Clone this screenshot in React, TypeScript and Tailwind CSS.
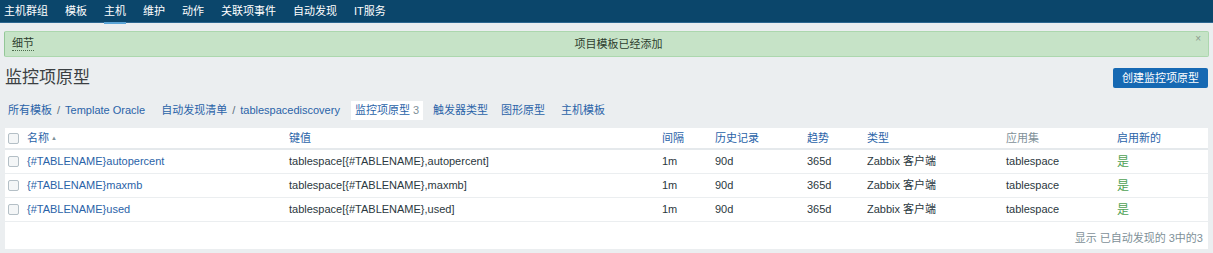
import { useState } from "react";

const nav = ["主机群组", "模板", "主机", "维护", "动作", "关联项事件", "自动发现", "IT服务"];

const rows = [
  { name: "{#TABLENAME}autopercent", key: "tablespace[{#TABLENAME},autopercent]" },
  { name: "{#TABLENAME}maxmb", key: "tablespace[{#TABLENAME},maxmb]" },
  { name: "{#TABLENAME}used", key: "tablespace[{#TABLENAME},used]" },
];

const grid = "grid grid-cols-[22px_262px_373px_53px_92px_60px_139px_111px_1fr] items-center";

function Box() {
  return <span className="block h-[11px] w-[11px] rounded-[2px] border border-[#b4bfc6] bg-[#f4f6f7]" />;
}

export default function App() {
  const [shown, setShown] = useState(true);

  return (
    <div className="h-[253px] w-[1213px] overflow-hidden bg-[#ebeef0] text-[11px] text-[#2b3840] [font-family:'Liberation_Sans','Noto_Sans_CJK_SC',sans-serif]">
      <div className="flex h-[23px] items-center gap-[17px] border-b border-[#2d6791] bg-[#0b466b] pl-[4px] text-[11px] text-white">
        {nav.map((n) => (
          <span key={n} className={`relative ${n === "主机" ? "after:absolute after:-bottom-[5px] after:left-0 after:h-[2px] after:w-full after:bg-[#5aa4d6]" : ""}`}>
            {n}
          </span>
        ))}
      </div>

      {shown && (
        <div className="mx-[4px] mt-[8px] flex h-[26px] items-center rounded-[2px] border border-[#acd7ae] border-l-[#93c797] bg-[#c6e3c7] px-[7px] text-[#2d3d2e]">
          <span className="border-b border-dotted border-[#4c6a4d] leading-[13px]">细节</span>
          <span className="flex-1 pl-[8px] text-center">项目模板已经添加</span>
          <button onClick={() => setShown(false)} className="-mt-[10px] text-[10px] leading-none text-[#8a9a8c]">×</button>
        </div>
      )}

      <div className="mx-[5px] mt-[10px] flex h-[22px] items-center justify-between">
        <h1 className="text-[17px] font-normal text-[#3b3f42]">监控项原型</h1>
        <button className="h-[20px] rounded-[2px] bg-[#1669b3] px-[9px] text-[11px] text-white">创建监控项原型</button>
      </div>

      <div className="mt-[12px] flex h-[19px] items-center pl-[8px] text-[#2a63a8]">
        <span>所有模板</span>
        <span className="px-[5px] text-[#5b6f7c]">/</span>
        <span>Template Oracle</span>
        <span className="ml-[16px]">自动发现清单</span>
        <span className="px-[5px] text-[#5b6f7c]">/</span>
        <span>tablespacediscovery</span>
        <span className="ml-[11px] flex h-[19px] items-center bg-white px-[4px] text-[#2a63a8]">
          监控项原型<span className="ml-[3px] text-[#7e9098]">3</span>
        </span>
        <span className="ml-[10px]">触发器类型</span>
        <span className="ml-[13px]">图形原型</span>
        <span className="ml-[16px]">主机模板</span>
      </div>

      <div className="mx-[5px] mt-[8px] bg-white">
        <div className={`${grid} h-[22px] border-b-2 border-[#e5e9ec] text-[#2a63a8]`}>
          <span className="pl-[3px]"><Box /></span>
          <span className="flex items-center">名称<span className="ml-[2px] text-[6px] text-[#7e9098]">▲</span></span>
          <span>键值</span>
          <span>间隔</span>
          <span>历史记录</span>
          <span>趋势</span>
          <span>类型</span>
          <span className="text-[#7e9098]">应用集</span>
          <span>启用新的</span>
        </div>
        {rows.map((r) => (
          <div key={r.name} className={`${grid} h-[24px] border-b border-[#ebeef0]`}>
            <span className="pl-[3px]"><Box /></span>
            <span className="text-[#2a63a8]">{r.name}</span>
            <span>{r.key}</span>
            <span>1m</span>
            <span>90d</span>
            <span>365d</span>
            <span>Zabbix 客户端</span>
            <span>tablespace</span>
            <span className="text-[12px] text-[#4ea153]">是</span>
          </div>
        ))}
        <div className="flex h-[27px] items-center justify-end pr-[5px] pt-[6px] text-[#7e9098]">显示 已自动发现的 3中的3</div>
      </div>
    </div>
  );
}
